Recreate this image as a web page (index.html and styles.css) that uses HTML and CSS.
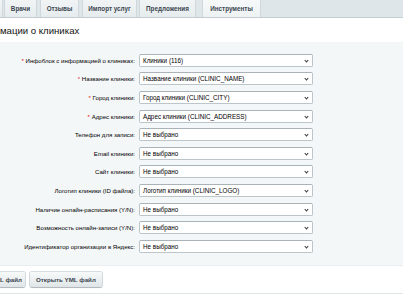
FILE: index.html
```html
<!DOCTYPE html>
<html>
<head>
<meta charset="utf-8">
<link rel="stylesheet" href="styles.css">
</head>
<body>
<div class="tabs">
  <div class="tab tab-stub"></div>
  <div class="tab t1">Врачи</div>
  <div class="tab t2">Отзывы</div>
  <div class="tab t3">Импорт услуг</div>
  <div class="tab t4">Предложения</div>
  <div class="tab t5 active">Инструменты</div>
</div>
<h1 class="title">мации о клиниках</h1>
<div class="panel">
  <div class="row"><label><span class="req">*</span> Инфоблок с информацией о клиниках:</label><div class="sel">Клиники (116)</div></div>
  <div class="row"><label><span class="req">*</span> Название клиники:</label><div class="sel">Название клиники (CLINIC_NAME)</div></div>
  <div class="row"><label><span class="req">*</span> Город клиники:</label><div class="sel">Город клиники (CLINIC_CITY)</div></div>
  <div class="row"><label><span class="req">*</span> Адрес клиники:</label><div class="sel">Адрес клиники (CLINIC_ADDRESS)</div></div>
  <div class="row"><label>Телефон для записи:</label><div class="sel">Не выбрано</div></div>
  <div class="row"><label>Email клиники:</label><div class="sel">Не выбрано</div></div>
  <div class="row"><label>Сайт клиники:</label><div class="sel">Не выбрано</div></div>
  <div class="row"><label>Логотип клиники (ID файла):</label><div class="sel">Логотип клиники (CLINIC_LOGO)</div></div>
  <div class="row"><label>Наличие онлайн-расписания (Y/N):</label><div class="sel">Не выбрано</div></div>
  <div class="row"><label>Возможность онлайн-записи (Y/N):</label><div class="sel">Не выбрано</div></div>
  <div class="row"><label>Идентификатор организации в Яндекс:</label><div class="sel">Не выбрано</div></div>
</div>
<div class="buttons">
  <div class="btn btn-cut">L файл</div>
  <div class="btn">Открыть YML файл</div>
</div>
</body>
</html>
```
FILE: styles.css
```css
html, body {
  margin: 0;
  padding: 0;
}
body {
  width: 403px;
  height: 294px;
  overflow: hidden;
  background: #fff;
  font-family: "Liberation Sans", Arial, sans-serif;
  color: #000;
}
.tabs {
  display: flex;
  height: 17px;
  background: #dfe6e9;
  border-bottom: 1px solid #c3ccd0;
  box-sizing: content-box;
}
.tab {
  height: 17px;
  display: flex;
  align-items: center;
  justify-content: center;
  font-size: 6.3px;
  font-weight: bold;
  color: #3b4650;
  background: linear-gradient(#f1f4f5, #e6ecee);
  border-left: 1px solid #d0d8db;
  border-right: 1px solid #d0d8db;
  box-sizing: border-box;
  margin-right: 2px;
  white-space: nowrap;
}
.tab-stub { width: 3px; border-left: none; margin-right: 1px; }
.t1 { width: 33px; }
.t2 { width: 39px; margin-left: 1px; }
.t3 { width: 55px; margin-left: 1px; }
.t4 { width: 57px; }
.t5 { width: 59px; margin-left: 4px; }
.active { background: linear-gradient(#f7f9f9, #eef2f3); }
.title {
  margin: 0;
  height: 24px;
  display: flex;
  align-items: center;
  font-size: 9.6px;
  font-weight: normal;
  color: #111;
}
.panel {
  background: #f4f7f8;
  padding: 9px 0 9px 0;
  border-bottom: 1px solid #e8edef;
}
.row {
  display: grid;
  grid-template-columns: 135px 174px;
  column-gap: 4px;
  align-items: center;
  height: 18.6px;
}
.row label {
  text-align: right;
  font-size: 6.1px;
  color: #000;
  white-space: nowrap;
}
.req { color: #e02020; }
.sel {
  position: relative;
  height: 13px;
  box-sizing: border-box;
  border: 1px solid #bcc5ca;
  border-top-color: #aab3b8;
  border-radius: 2px;
  background: #fff;
  font-size: 6.3px;
  display: flex;
  align-items: center;
  padding-left: 3px;
  color: #000;
  white-space: nowrap;
  overflow: hidden;
}
.sel::after {
  content: "";
  position: absolute;
  right: 4px;
  top: 4px;
  width: 2px;
  height: 2px;
  border-right: 1px solid #333;
  border-bottom: 1px solid #333;
  transform: rotate(45deg);
}
.buttons {
  display: flex;
  gap: 5px;
  padding-top: 6px;
  height: 21px;
  border-bottom: 1px solid #dfe5e7;
}
.btn {
  height: 15px;
  box-sizing: border-box;
  padding: 0 6px;
  display: flex;
  align-items: center;
  font-size: 6.2px;
  font-weight: bold;
  color: #3b4650;
  background: linear-gradient(#f8fafa, #dfe5e7);
  border-radius: 2px;
  box-shadow: 0 1px 1px rgba(0,0,0,0.18), 0 0 0 1px #d6dde0;
  white-space: nowrap;
}
.btn-cut {
  padding-left: 0;
  border-radius: 0 2px 2px 0;
  width: 25px;
}
```
